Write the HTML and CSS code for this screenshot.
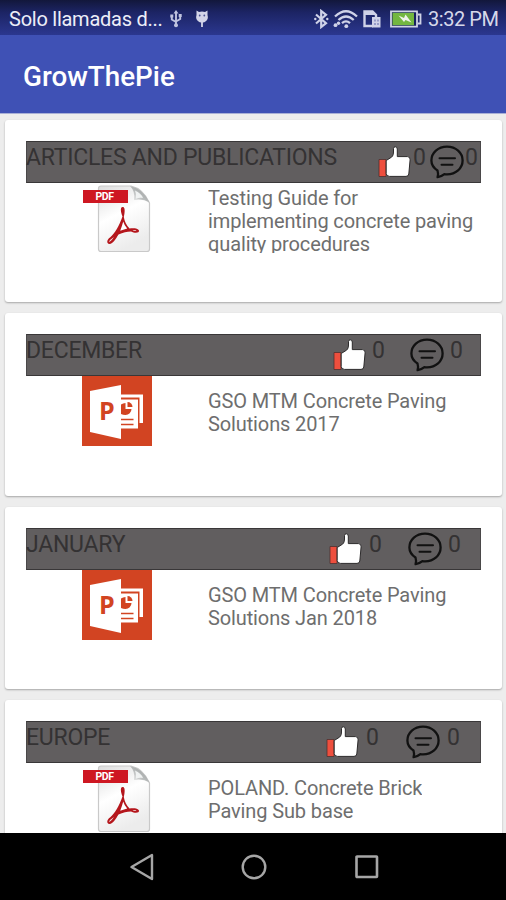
FILE: index.html
```
<!DOCTYPE html>
<html lang="es">
<head>
  <meta charset="UTF-8" />
  <meta name="viewport" content="width=device-width, initial-scale=1.0" />
  <title>GrowThePie</title>
  <link rel="stylesheet" href="styles.css">
</head>
<body>
  <!-- shared icons -->
  <svg class="sprite" width="0" height="0">
    <defs>
      <linearGradient id="paper" x1="0" y1="0" x2="0.4" y2="1">
        <stop offset="0" stop-color="#dcdcdc" />
        <stop offset="0.5" stop-color="#ffffff" />
        <stop offset="1" stop-color="#ececec" />
      </linearGradient>
      <linearGradient id="fold" x1="0" y1="1" x2="1" y2="0">
        <stop offset="0" stop-color="#f8f8f8" />
        <stop offset="0.5" stop-color="#b5b8b8" />
        <stop offset="1" stop-color="#8d9090" />
      </linearGradient>
    </defs>
    <symbol id="icon-like" viewBox="0 0 34 34">
      <path d="M1 14.5h7v17H1z" fill="#ee4f3e" stroke="#51302f" stroke-width="0.8" />
      <path d="M8.2 15.5L13.5 12.2C15.2 10.8 15.5 9 15.5 6V3.5Q15.6 1.8 17.3 1.8Q19 1.8 19.3 4V11.6H29.5Q32.4 11.8 32.1 14.8L30.8 29Q30.5 31.4 28 31.4H11.5Q8.2 31.2 8.2 28.5Z" fill="#fff" stroke="#2c2a2b" stroke-width="1" />
    </symbol>
    <symbol id="icon-comment" viewBox="0 0 34 34">
      <path d="M7.5 25.5C3.5 23 1.4 19.6 1.4 15.6C1.4 7.7 8.2 1.7 17 1.7S32.6 7.7 32.6 15.6S25.8 29.3 17 29.3Q15.7 29.3 14.4 29.1Q11.5 31.5 7.6 32.2Q8.6 29 7.5 25.5Z" fill="none" stroke="#111" stroke-width="2.3" stroke-linejoin="round" />
      <path d="M9.5 13.3H25M11.5 19.8H22.5" stroke="#111" stroke-width="2" stroke-linecap="round" />
    </symbol>
    <symbol id="icon-pdf" viewBox="0 0 70 70">
      <path d="M16.5 5.5Q16.5 3 19 3H49Q61 5.5 67.5 20V66Q67.5 68.5 65 68.5H19Q16.5 68.5 16.5 66Z" fill="url(#paper)" stroke="#c9c9c9" stroke-width="1.2" />
      <path d="M48 3Q61 5.5 67.5 19.5Q61 15.5 52 17Q53.5 8.5 48 3Z" fill="url(#fold)" />
      <path d="M53 7.5Q59 10 61 15Q57.5 14.3 53.8 15.8Q54.5 11 53 7.5Z" fill="#f0f2f2" />
      <path d="M1 7H46V20H1z" fill="#ce1722" />
      <path d="M41 24C38 23.5 38.5 28.5 40.5 33.5C37 43 33 50 28 54.5C25 56.5 24 60.5 27.5 61C31 61 34 55.5 36.5 51.5C41 49.5 45 48.5 49 48.5C53 50.5 57.5 50 57 47.5C56 45 51 45 47.5 45.5C44.5 42.5 42.5 38.5 41.8 34C43 29 43.2 24.5 41 24Z" fill="#b5161c" />
      <path d="M41.2 38.5Q42.5 42.7 45.2 45.6L38.2 47.8Q39.9 43.5 41.2 38.5Z" fill="#fff" />
      <path d="M26.8 59Q28 56.5 32 54Q29 58.5 26.8 59ZM50.5 47Q54 46.6 54.5 48Q52 48.4 50.5 47Z" fill="#f3e3e3" />
    </symbol>
    <symbol id="icon-ppt" viewBox="0 0 70 70">
      <path d="M0 0H70V70H0z" fill="#d24422" />
      <path d="M39 18.5H61V47H39z" fill="#fff" />
      <path d="M39 21.5H57.5V54H39z" fill="#d24422" />
      <path d="M39 23.5H56V52.5H39z" fill="#fff" />
      <path d="M39 28.5V38Q41 39 43.5 39A6 6 0 0 0 49.5 33H43.5V27Q41 27 39 28.5Z" fill="#d24422" />
      <path d="M45.5 26V31H50.5A5 5 0 0 0 45.5 26Z" fill="#d24422" />
      <path d="M39 43.5H51.5M39 48.5H51.5" stroke="#d24422" stroke-width="1.6" />
      <path d="M8 15L39 9V63L8 56Z" fill="#fff" />
    </symbol>
  </svg>

  <div class="screen">
    <div class="status-bar">
      <span class="carrier">Solo llamadas d...</span>
      <svg class="usb" width="12" height="18" viewBox="0 0 12 18">
        <path d="M6 2V15M1.8 6V9.5L6 12M10.2 5.5V9L6 11.5" fill="none" stroke="#bfc3df" stroke-width="1.9" />
        <path d="M6 0L8.5 3.5H3.5zM0.3 4.5H3.3V7.5H0.3zM8.7 4H11.7V7H8.7z" fill="#bfc3df" />
        <circle cx="6" cy="15.3" r="2" fill="#bfc3df" />
      </svg>
      <svg class="debug" width="14" height="18" viewBox="0 0 14 18">
        <path d="M1.5 0.5L4 2Q7 1 10 2L12.5 0.5L12.5 5Q13.8 9 10.8 11.3Q9.2 12.5 7.9 12.6V17H6.1V12.6Q4.8 12.5 3.2 11.3Q0.2 9 1.5 5Z" fill="#d3d5e8" />
        <circle cx="4.7" cy="5.5" r="0.9" fill="#4a5190" />
        <circle cx="9.3" cy="5.5" r="0.9" fill="#4a5190" />
      </svg>
      <div class="status-icons">
        <svg width="15" height="20" viewBox="0 0 15 20">
          <path d="M2 5.5L12 14.2L7.2 18V2L12 5.8L2 14.5" fill="none" stroke="#cfd2e8" stroke-width="2.2" />
          <circle cx="1.3" cy="10" r="1.2" fill="#cfd2e8" />
          <circle cx="13.3" cy="10" r="1.2" fill="#cfd2e8" />
        </svg>
        <svg width="26" height="20" viewBox="0 0 26 20">
          <path d="M2 7.5Q13 -3 24 7.5M5.5 11Q13 4 20.7 11M9 14.2Q13 10.5 17 14.2" fill="none" stroke="#cfd2e8" stroke-width="2.3" />
          <circle cx="13.3" cy="17.2" r="1.9" fill="#cfd2e8" />
          <circle cx="5.5" cy="14.3" r="1.7" fill="#cfd2e8" />
          <circle cx="2.5" cy="16.2" r="1.9" fill="#cfd2e8" />
        </svg>
        <svg width="18" height="18" viewBox="0 0 18 18">
          <path d="M10 16H1.5V1.5H9.5L13 5V8" fill="none" stroke="#cfd2e8" stroke-width="2.4" />
          <path d="M1 1H9.5L13 5H1z" fill="#cfd2e8" />
          <path d="M9 7H17.5V17.5H9z" fill="#cfd2e8" />
          <path d="M12 9.5V15M15 9.5V15" stroke="#7178b4" stroke-width="1.2" stroke-dasharray="2 1.5" />
        </svg>
        <svg width="32" height="18" viewBox="0 0 32 18">
          <path d="M1 1.3H27V16.7H1z" fill="#17205f" stroke="#d0d3e6" stroke-width="1.8" />
          <path d="M28 4.5H30.5V13.5H28" fill="none" stroke="#d0d3e6" stroke-width="1.8" />
          <path d="M2.5 2.8H24V15.2H2.5z" fill="#73b740" />
          <path d="M8.5 5.5L14 8L15.5 4.5L21.5 12.5L15.5 10L14 12z" fill="#eef3ea" />
        </svg>
      </div>
      <span class="clock">3:32 PM</span>
    </div>

    <header class="app-bar">
      <h1>GrowThePie</h1>
    </header>

    <main class="list">
      <article class="card">
        <div class="card-header articles">
          <span class="category">ARTICLES AND PUBLICATIONS</span>
          <svg class="like"><use href="#icon-like" /></svg>
          <span>0</span>
          <svg class="comment"><use href="#icon-comment" /></svg>
          <span>0</span>
        </div>
        <div class="card-body">
          <svg class="file-icon">
            <use href="#icon-pdf" />
            <text class="pdf-tag" x="22.5" y="17.3" text-anchor="middle">PDF</text>
          </svg>
          <div class="description"><p>Testing Guide for<br>implementing concrete paving<br>quality procedures</p></div>
        </div>
      </article>

      <article class="card">
        <div class="card-header december">
          <span class="category">DECEMBER</span>
          <svg class="like"><use href="#icon-like" /></svg>
          <span>0</span>
          <svg class="comment"><use href="#icon-comment" /></svg>
          <span>0</span>
        </div>
        <div class="card-body">
          <svg class="file-icon">
            <use href="#icon-ppt" />
            <text class="ppt-letter" x="17" y="44">P</text>
          </svg>
          <div class="description"><p>GSO MTM Concrete Paving<br>Solutions 2017</p></div>
        </div>
      </article>

      <article class="card">
        <div class="card-header january">
          <span class="category">JANUARY</span>
          <svg class="like"><use href="#icon-like" /></svg>
          <span>0</span>
          <svg class="comment"><use href="#icon-comment" /></svg>
          <span>0</span>
        </div>
        <div class="card-body">
          <svg class="file-icon">
            <use href="#icon-ppt" />
            <text class="ppt-letter" x="17" y="44">P</text>
          </svg>
          <div class="description"><p>GSO MTM Concrete Paving<br>Solutions Jan 2018</p></div>
        </div>
      </article>

      <article class="card">
        <div class="card-header europe">
          <span class="category">EUROPE</span>
          <svg class="like"><use href="#icon-like" /></svg>
          <span>0</span>
          <svg class="comment"><use href="#icon-comment" /></svg>
          <span>0</span>
        </div>
        <div class="card-body">
          <svg class="file-icon">
            <use href="#icon-pdf" />
            <text class="pdf-tag" x="22.5" y="17.3" text-anchor="middle">PDF</text>
          </svg>
          <div class="description"><p>POLAND. Concrete Brick<br>Paving Sub base</p></div>
        </div>
      </article>
    </main>

    <nav class="nav-bar">
      <svg width="26" height="28" viewBox="0 0 26 28">
        <path d="M23 2V26L2.5 14Z" fill="none" stroke="#a6a6a6" stroke-width="2.4" stroke-linejoin="round" />
      </svg>
      <svg width="26" height="28" viewBox="0 0 26 28">
        <circle cx="13" cy="14" r="11.3" fill="none" stroke="#a6a6a6" stroke-width="2.4" />
      </svg>
      <svg width="26" height="28" viewBox="0 0 26 28">
        <rect x="2.5" y="3.5" width="20.5" height="20.5" rx="0.5" fill="none" stroke="#a6a6a6" stroke-width="2.6" />
      </svg>
    </nav>
  </div>
</body>
</html>
```
FILE: styles.css
```
* {
  box-sizing: border-box;
}
body {
  margin: 0;
  font-family: Roboto, "Liberation Sans", sans-serif;
  background: #ededed;
}
.sprite {
  position: absolute;
}
.screen {
  width: 506px;
  height: 900px;
  display: flex;
  flex-direction: column;
  overflow: hidden;
}

/* status bar */
.status-bar {
  height: 35px;
  flex: none;
  display: flex;
  align-items: center;
  padding: 3px 8px 0 9px;
  background: linear-gradient(#12173b, #1c2464 35%, #2b378f);
  color: #d6d8ea;
}
.carrier {
  font-size: 20px;
  letter-spacing: -0.25px;
  width: 161px;
  color: #eceef8;
  white-space: nowrap;
}
.debug {
  margin-left: 13px;
}
.status-icons {
  display: flex;
  align-items: center;
  gap: 4px;
  margin-left: auto;
}
.status-icons svg:nth-child(3) {
  margin-right: 5px;
}
.clock {
  font-size: 20px;
  letter-spacing: -0.45px;
  width: 70px;
  margin-left: 6px;
  white-space: nowrap;
}

.app-bar {
  height: 79px;
  flex: none;
  display: flex;
  align-items: center;
  padding: 5px 23px 0;
  background: #3f51b5;
  border-bottom: 1px solid #a9b0d6;
}
.app-bar h1 {
  margin: 0;
  font-size: 27.8px;
  font-weight: 500;
  color: #fff;
}

/* cards */
.list {
  flex: 1;
  min-height: 0;
  overflow: hidden;
  display: flex;
  flex-direction: column;
  gap: 11px;
  padding: 6px 4px 0 5px;
  background: #ededed;
}
.card {
  flex: none;
  height: 182.4px;
  padding: 21px 21px 0;
  background: #fff;
  border-radius: 3px;
  box-shadow: 0 1px 2px rgba(0, 0, 0, 0.3);
}
.card-header {
  width: 455px;
  height: 42px;
  display: grid;
  align-items: start;
  background: #615e5f;
  border: 1px solid #393738;
  border-left-color: #4a4849;
  border-right-color: #4a4849;
  font-size: 23px;
  line-height: 28px;
  color: #343233;
  padding-top: 2px;
}
.category {
  margin-left: -1px;
  letter-spacing: -0.25px;
  white-space: nowrap;
}
.articles { grid-template-columns: 351px 35px 17px 35px 1fr; }
.december { grid-template-columns: 306px 39px 38px 40px 1fr; }
.january { grid-template-columns: 302px 40px 39px 40px 1fr; }
.europe { grid-template-columns: 299px 40px 40px 41px 1fr; }
.like, .comment {
  width: 34px;
  height: 34px;
  margin-top: 1px;
}
.card-body {
  display: flex;
  padding-left: 56px;
}
.file-icon {
  width: 70px;
  height: 70px;
  flex: none;
}
.description {
  height: 67px;
  margin: 3px 0 0 56px;
  padding-top: 1px;
  display: flex;
  align-items: safe center;
  overflow: hidden;
}
.description p {
  margin: 0;
  font-size: 20px;
  letter-spacing: -0.12px;
  line-height: 23.2px;
  color: #6e6e6e;
  white-space: nowrap;
}
.pdf-tag {
  font-family: Roboto, sans-serif;
  font-size: 10.5px;
  font-weight: bold;
  letter-spacing: -0.5px;
  fill: #fff;
}
.ppt-letter {
  font-family: "Open Sans", sans-serif;
  font-size: 25px;
  font-weight: bold;
  fill: #d24422;
}

/* system navigation */
.nav-bar {
  height: 67px;
  flex: none;
  display: flex;
  justify-content: center;
  gap: 86.5px;
  padding: 20px 0 0 2px;
  background: #000;
}
```
